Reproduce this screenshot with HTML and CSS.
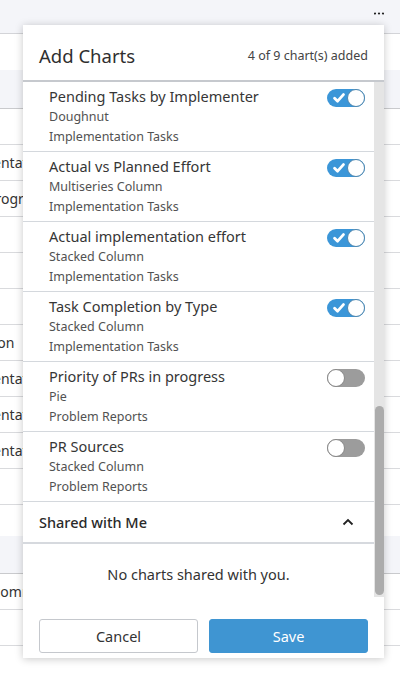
FILE: index.html
```html
<!DOCTYPE html>
<html lang="en">
<head>
<meta charset="utf-8">
<title>Add Charts</title>
<link rel="stylesheet" href="styles.css">
</head>
<body>
<div class="page">
  <div class="topbar">
    <svg class="more" viewBox="0 0 10 3" aria-label="More"><circle cx="1" cy="1.5" r="1.1"/><circle cx="5" cy="1.5" r="1.1"/><circle cx="9" cy="1.5" r="1.1"/></svg>
  </div>
  <div class="bg-gap"></div>
  <div class="bg-band"></div>
  <div class="bg-row"></div>
  <div class="bg-row"><span class="cell cell-a">Implementation</span></div>
  <div class="bg-row"><span class="cell cell-b">In Progress</span></div>
  <div class="bg-row"></div>
  <div class="bg-row"></div>
  <div class="bg-row"></div>
  <div class="bg-row"><span class="cell cell-d">Completion</span></div>
  <div class="bg-row"><span class="cell cell-a">Implementation</span></div>
  <div class="bg-row"><span class="cell cell-a">Implementation</span></div>
  <div class="bg-row"><span class="cell cell-a">Implementation</span></div>
  <div class="bg-row"></div>
  <div class="bg-gap2"></div>
  <div class="bg-band2"></div>
  <div class="bg-row"><span class="cell cell-c">Recommendation</span></div>
  <div class="bg-row"></div>
  <div class="bg-row"></div>
</div>

<div class="dialog">
  <div class="dialog-head">
    <h1 class="dialog-title">Add Charts</h1>
    <span class="dialog-count">4 of 9 chart(s) added</span>
  </div>
  <div class="dialog-body">
    <div class="list">
      <div class="list-inner">
        <div class="item">
          <div class="item-top"><span class="item-title">Pending Tasks by Implementer</span><span class="toggle on"><svg class="check" viewBox="0 0 12 10"><path d="M1.6 5.2 L4.6 8.2 L10.4 1.6"/></svg><span class="knob"></span></span></div>
          <div class="item-sub">Doughnut</div>
          <div class="item-sub">Implementation Tasks</div>
        </div>
        <div class="item">
          <div class="item-top"><span class="item-title">Actual vs Planned Effort</span><span class="toggle on"><svg class="check" viewBox="0 0 12 10"><path d="M1.6 5.2 L4.6 8.2 L10.4 1.6"/></svg><span class="knob"></span></span></div>
          <div class="item-sub">Multiseries Column</div>
          <div class="item-sub">Implementation Tasks</div>
        </div>
        <div class="item">
          <div class="item-top"><span class="item-title">Actual implementation effort</span><span class="toggle on"><svg class="check" viewBox="0 0 12 10"><path d="M1.6 5.2 L4.6 8.2 L10.4 1.6"/></svg><span class="knob"></span></span></div>
          <div class="item-sub">Stacked Column</div>
          <div class="item-sub">Implementation Tasks</div>
        </div>
        <div class="item">
          <div class="item-top"><span class="item-title">Task Completion by Type</span><span class="toggle on"><svg class="check" viewBox="0 0 12 10"><path d="M1.6 5.2 L4.6 8.2 L10.4 1.6"/></svg><span class="knob"></span></span></div>
          <div class="item-sub">Stacked Column</div>
          <div class="item-sub">Implementation Tasks</div>
        </div>
        <div class="item">
          <div class="item-top"><span class="item-title">Priority of PRs in progress</span><span class="toggle off"><span class="knob"></span></span></div>
          <div class="item-sub">Pie</div>
          <div class="item-sub">Problem Reports</div>
        </div>
        <div class="item">
          <div class="item-top"><span class="item-title">PR Sources</span><span class="toggle off"><span class="knob"></span></span></div>
          <div class="item-sub">Stacked Column</div>
          <div class="item-sub">Problem Reports</div>
        </div>

        <div class="section">
          <span class="section-title">Shared with Me</span>
          <svg class="chev" viewBox="0 0 12 8"><path d="M1.5 6.5 L6 2 L10.5 6.5"/></svg>
        </div>
        <div class="empty">No charts shared with you.</div>
      </div>
    </div>
    <div class="rail"><div class="thumb"></div></div>
  </div>
  <div class="dialog-foot">
    <button class="btn btn-cancel">Cancel</button>
    <button class="btn btn-save">Save</button>
  </div>
</div>
</body>
</html>
```

FILE: styles.css
```css
html, body {
  margin: 0;
  padding: 0;
}
body {
  width: 400px;
  height: 677px;
  overflow: hidden;
  position: relative;
  background: #ffffff;
  font-family: "Noto Sans", "Open Sans", sans-serif;
  color: #333333;
}

/* background page */
.page {
  display: flex;
  flex-direction: column;
}
.topbar {
  height: 34px;
  box-sizing: border-box;
  background: #f4f5f9;
  border-bottom: 1px solid #d3d4d8;
  display: flex;
  justify-content: flex-end;
  align-items: flex-start;
  padding: 12px 16px 0 0;
}
.more {
  width: 10px;
  height: 3px;
  fill: #222222;
}
.bg-gap {
  height: 36px;
}
.bg-band {
  height: 38px;
  background: #f4f5f9;
  border-bottom: 1px solid #c9cacd;
}
.bg-row {
  height: 35px;
  border-bottom: 1px solid #d9dadd;
  display: flex;
  align-items: center;
  overflow: hidden;
  white-space: nowrap;
  font-size: 14px;
  color: #333333;
}
.bg-gap2 {
  height: 31px;
}
.bg-band2 {
  height: 37px;
  background: #f4f5f9;
  border-bottom: 1px solid #c9cacd;
}
.cell-a { margin-left: -58px; }
.cell-b { margin-left: -30px; }
.cell-c { margin-left: -23px; }
.cell-d { margin-left: -62px; }

/* dialog */
.dialog {
  position: absolute;
  left: 23px;
  top: 25px;
  width: 361px;
  height: 633px;
  background: #ffffff;
  box-shadow: 0 1px 8px rgba(0, 0, 0, 0.22);
  display: flex;
  flex-direction: column;
}
.dialog-head {
  height: 57px;
  box-sizing: border-box;
  padding: 5px 16px 0 16px;
  display: flex;
  align-items: center;
  justify-content: space-between;
  border-bottom: 2px solid #c6c9ce;
  flex-shrink: 0;
}
.dialog-title {
  margin: 0;
  font-size: 18.5px;
  font-weight: 400;
  color: #2f2f2f;
}
.dialog-count {
  font-size: 12.5px;
  color: #444444;
}
.dialog-body {
  height: 515px;
  display: flex;
  flex-shrink: 0;
}
.list {
  flex: 1;
  overflow: hidden;
  display: flex;
  flex-direction: column;
  justify-content: flex-end;
}
.list-inner {
  flex-shrink: 0;
}
.rail {
  width: 10px;
  background: #e5e5e5;
  display: flex;
  flex-direction: column;
}
.thumb {
  margin-top: 324px;
  height: 189px;
  width: 9px;
  margin-left: 1px;
  background: #acacac;
  border-radius: 5px;
}

.item {
  height: 70px;
  box-sizing: border-box;
  padding: 3px 9px 0 26px;
  border-bottom: 1px solid #d4d8dd;
}
.item-top {
  height: 22px;
  display: flex;
  align-items: center;
  justify-content: space-between;
}
.item-title {
  font-size: 14.5px;
  line-height: 22px;
  color: #363636;
}
.item-sub {
  font-size: 12.5px;
  line-height: 19.5px;
  color: #525252;
}

.toggle {
  width: 38px;
  height: 18px;
  margin-top: 4px;
  border-radius: 9px;
  box-sizing: border-box;
  display: flex;
  align-items: center;
  flex-shrink: 0;
}
.toggle.on {
  background: #3b96d8;
  justify-content: space-between;
  padding-left: 6px;
}
.toggle.off {
  background: #9c9c9c;
  justify-content: flex-start;
}
.knob {
  width: 18px;
  height: 18px;
  border-radius: 50%;
  background: #ffffff;
  box-sizing: border-box;
  border: 1px solid #4f86ad;
}
.toggle.off .knob {
  border-color: #878787;
}
.check {
  width: 12px;
  height: 10px;
  fill: none;
  stroke: #ffffff;
  stroke-width: 2.8;
  stroke-linecap: round;
  stroke-linejoin: round;
}

.section {
  height: 42px;
  box-sizing: border-box;
  padding: 0 20px 0 16px;
  display: flex;
  align-items: center;
  justify-content: space-between;
  border-bottom: 2px solid #d6d9de;
}
.section-title {
  font-size: 14.5px;
  font-weight: 500;
  color: #2a2a2a;
}
.chev {
  width: 12px;
  height: 8px;
  fill: none;
  stroke: #222222;
  stroke-width: 1.8;
}
.empty {
  padding: 20px 0 13px 0;
  text-align: center;
  font-size: 14.5px;
  line-height: 20px;
  color: #333333;
}

.dialog-foot {
  flex: 1;
  box-sizing: border-box;
  padding: 22px 16px 5px 16px;
  display: flex;
  gap: 11px;
}
.btn {
  flex: 1;
  height: 34px;
  border-radius: 3px;
  font-family: "Noto Sans", "Open Sans", sans-serif;
  font-size: 14.5px;
  cursor: pointer;
}
.btn-cancel {
  background: #ffffff;
  border: 1px solid #c5c8cd;
  color: #333333;
}
.btn-save {
  background: #3f95d2;
  border: 1px solid #3f95d2;
  color: #ffffff;
}
```
